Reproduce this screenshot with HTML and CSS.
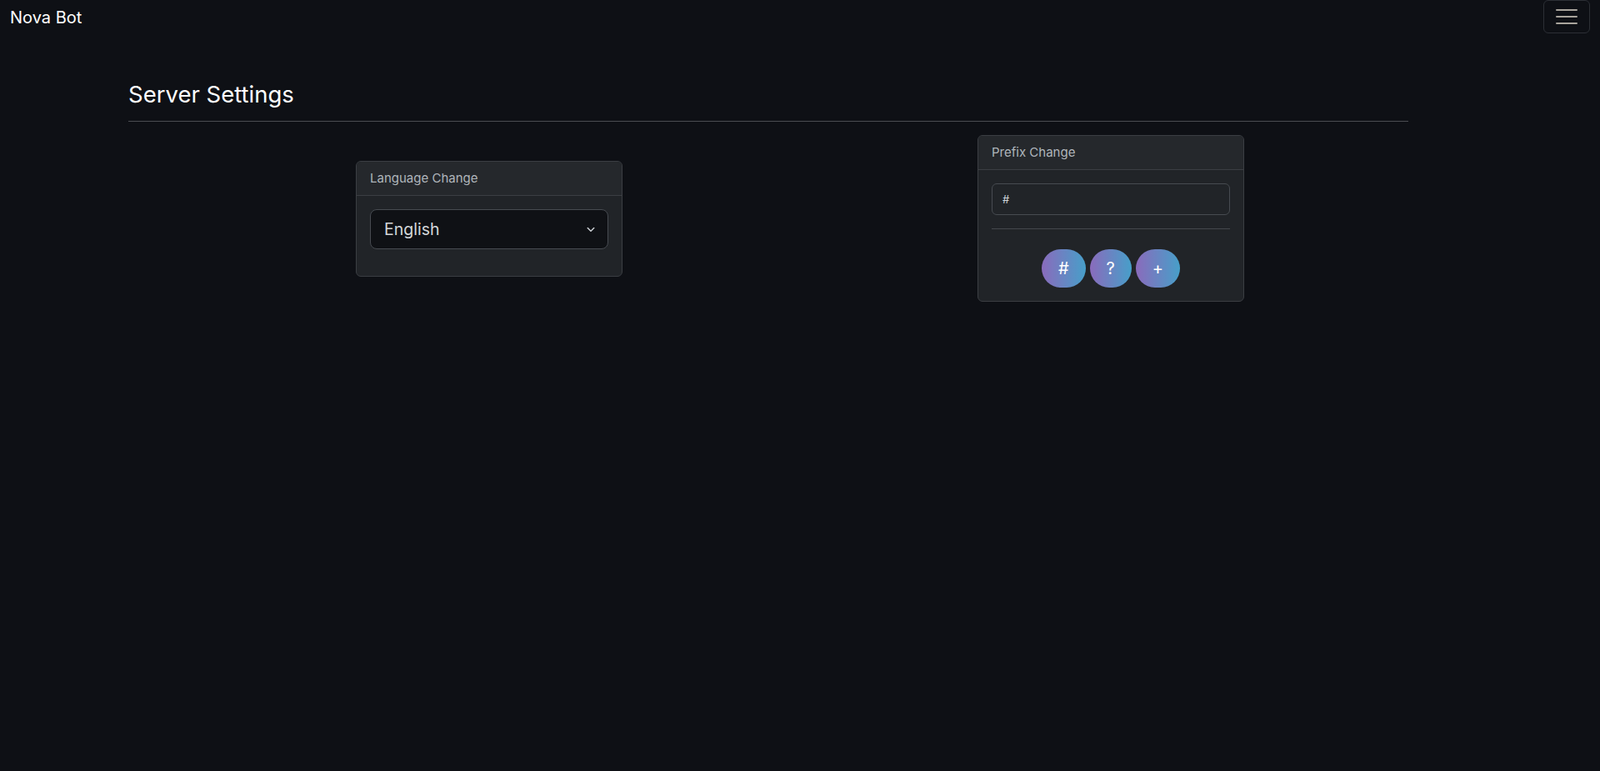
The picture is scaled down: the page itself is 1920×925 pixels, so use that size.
FILE: index.html
```html
<!DOCTYPE html>
<html>

<head>
    <title>Nova Bot - Server Settings</title>
    <link rel="stylesheet" href="styles.css">
</head>

<body>
    <nav class="navbar">
        <a class="brand" href="#">Nova Bot</a>
        <button class="toggler" type="button">
            <svg width="30" height="30" viewBox="0 0 30 30">
                <path d="M3 7h24M3 15h24M3 23h24" stroke="#a9a49c" stroke-width="2" stroke-linecap="round" />
            </svg>
        </button>
    </nav>

    <div class="page">
        <h3 class="pageTitle">Server Settings</h3>
        <hr class="titleLine">
    </div>

    <div class="cardRow">
        <!-- 言語 -->
        <div class="card">
            <div class="cardHeader">Language Change</div>
            <div class="cardBody">
                <div class="selectBox">
                    <span>English</span>
                    <svg width="16" height="12" viewBox="0 0 16 16">
                        <path d="M3 6l5 5 5-5" fill="none" stroke="#c9cdd1" stroke-width="2" stroke-linecap="round" stroke-linejoin="round" />
                    </svg>
                </div>
            </div>
        </div>
        <!-- プレフィックス -->
        <div class="card">
            <div class="cardHeader">Prefix Change</div>
            <div class="cardBody">
                <input class="prefixInput" type="text" value="#">
                <hr class="cardLine">
                <div class="buttonBox">
                    <button class="prefixButton">#</button>
                    <button class="prefixButton">?</button>
                    <button class="prefixButton">+</button>
                </div>
            </div>
        </div>
    </div>
</body>

</html>
```

FILE: styles.css
```css
body {
    margin: 0;
    background-color: #0e1015;
    color: #dee2e6;
    font-family: Inter, "Noto Sans", sans-serif;
}

.navbar {
    display: flex;
    justify-content: space-between;
    align-items: flex-start;
    padding: 0 12px;
    height: 40px;
}

.brand {
    color: #ffffff;
    text-decoration: none;
    font-size: 20px;
    line-height: 30px;
    padding-top: 6px;
}

.toggler {
    width: 56px;
    height: 40px;
    padding: 0;
    display: flex;
    align-items: center;
    justify-content: center;
    background: transparent;
    border: 1px solid #2c2f35;
    border-radius: 6px;
}

.page {
    width: 1536px;
    margin-left: 154px;
    padding-top: 56px;
}

.pageTitle {
    margin: 0;
    font-size: 27.5px;
    font-weight: 400;
    line-height: 34px;
    color: #ffffff;
}

.titleLine {
    margin: 15px 0 0 0;
    border: 0;
    border-top: 1px solid #4b4d52;
}

.cardRow {
    width: 1492px;
    margin-left: 214px;
    margin-top: 16px;
    display: flex;
    justify-content: space-around;
    align-items: center;
}

.card {
    width: 320px;
    box-sizing: border-box;
    background-color: #212428;
    border: 1px solid #3b3e43;
    border-radius: 6px;
    overflow: hidden;
}

.cardHeader {
    padding: 8px 16px;
    line-height: 24px;
    font-size: 15px;
    color: #afb5bb;
    background-color: #25282c;
    border-bottom: 1px solid #3b3e43;
}

.cardBody {
    padding: 16px;
}

.selectBox {
    height: 48px;
    box-sizing: border-box;
    display: flex;
    align-items: center;
    justify-content: space-between;
    padding: 0 12px 0 16px;
    margin-bottom: 16px;
    background-color: #0f1115;
    border: 1px solid #474b51;
    border-radius: 8px;
    font-size: 19.5px;
    color: #d4d7da;
}

.prefixInput {
    display: block;
    width: 100%;
    height: 38px;
    box-sizing: border-box;
    padding: 6px 12px;
    background-color: transparent;
    border: 1px solid #474b51;
    border-radius: 6px;
    font-family: Inter, "Noto Sans", sans-serif;
    font-size: 13px;
    color: #ced4da;
}

.cardLine {
    margin: 16px 0 24px 0;
    border: 0;
    border-top: 1px solid #45484d;
}

.buttonBox {
    display: flex;
    justify-content: center;
    gap: 5px;
}

.prefixButton {
    height: 46px;
    padding: 0 20px;
    border: 0;
    border-radius: 23px;
    background: linear-gradient(90deg, #8a6bbc, #479fc9);
    color: #ffffff;
    font-family: Inter, "Noto Sans", sans-serif;
    font-size: 20px;
    font-weight: 400;
}
```
